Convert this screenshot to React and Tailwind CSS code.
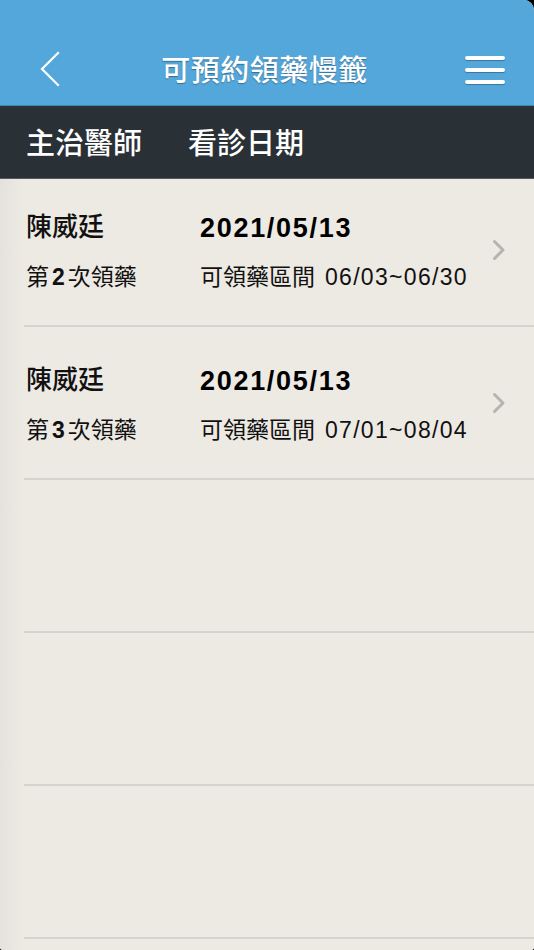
// Booking list for refill prescriptions: header, column titles, rows.

const cjk = { fontFamily: '"Noto Sans CJK TC", "Noto Sans", sans-serif' };
const latin = {
  fontFamily: '"Liberation Sans", "Noto Sans CJK TC", Arial, sans-serif',
};

const records = [
  { doctor: "陳威廷", visit: "2021/05/13", round: 2, range: "06/03~06/30" },
  { doctor: "陳威廷", visit: "2021/05/13", round: 3, range: "07/01~08/04" },
  null,
  null,
  null,
];

const BackIcon = () => (
  <svg width="20" height="36" viewBox="0 0 20 36" fill="none">
    <path
      d="M18 2 L2 18 L18 34"
      stroke="white"
      strokeWidth="2.2"
      strokeLinecap="square"
    />
  </svg>
);

const ChevronRight = () => (
  <svg width="14" height="22" viewBox="0 0 14 22" fill="none">
    <path
      d="M2.5 2.5 L11 11 L2.5 19.5"
      stroke="#b6b3b0"
      strokeWidth="3"
      strokeLinecap="round"
      strokeLinejoin="round"
    />
  </svg>
);

const Row = ({ item, first }) => (
  <div
    className={`ml-[24px] border-b-2 border-[#d6d2cd] flex items-center ${
      first ? "h-[148px] pb-[5px]" : "h-[153px]"
    }`}
  >
    {item && (
      <>
        <div className="flex-1 flex flex-col gap-[17px] pl-[2px] pt-[5px]">
          <div className="flex items-center h-[32px]">
            <span
              className="w-[174px] text-[26px] font-medium text-[#111] mb-[8px]"
              style={cjk}
            >
              {item.doctor}
            </span>
            <span
              className="text-[27px] font-bold text-black tracking-[1.7px]"
              style={latin}
            >
              {item.visit}
            </span>
          </div>
          <div className="flex items-center h-[30px]">
            <span
              className="w-[174px] text-[23px] text-[#111] flex items-baseline"
              style={cjk}
            >
              第<b className="font-bold mx-[3px]" style={latin}>{item.round}</b>
              次領藥
            </span>
            <span className="text-[23px] text-[#111]" style={cjk}>
              可領藥區間
              <span className="ml-[10px] tracking-[1.3px]" style={latin}>
                {item.range}
              </span>
            </span>
          </div>
        </div>
        <div className="pr-[28px] pt-[1px]">
          <ChevronRight />
        </div>
      </>
    )}
  </div>
);

export default function App() {
  return (
    <div className="bg-black w-[534px] h-[950px]">
      <div className="w-[534px] h-[950px] flex flex-col bg-[#ede9e3] rounded-tr-[10px] rounded-b-[3px] overflow-hidden">
        {/* top bar */}
        <header className="h-[106px] shrink-0 bg-[#54a7db] border-b border-[#3f87b5] flex items-end pb-[18px] px-[40px]">
          <div className="flex items-center w-full h-[36px]">
            <BackIcon />
            <h1
              className="flex-1 text-center text-white text-[29px] font-medium tracking-[0.5px] pl-[4px] [text-shadow:0_1px_1px_rgba(0,0,0,0.35)]"
              style={cjk}
            >
              可預約領藥慢籤
            </h1>
            <div className="flex flex-col gap-[8px] -mr-[11px] pt-[1px]">
              <span className="block w-[40px] h-[4px] rounded-full bg-white shadow-[0_1px_1px_rgba(0,0,0,0.3)]" />
              <span className="block w-[40px] h-[4px] rounded-full bg-white shadow-[0_1px_1px_rgba(0,0,0,0.3)]" />
              <span className="block w-[40px] h-[4px] rounded-full bg-white shadow-[0_1px_1px_rgba(0,0,0,0.3)]" />
            </div>
          </div>
        </header>

        {/* column titles */}
        <div className="h-[73px] shrink-0 bg-[#2a3136] border-b border-[#55595c] flex items-center pl-[26px] pb-[1px]">
          <span className="w-[162px] text-white text-[29px] font-medium" style={cjk}>
            主治醫師
          </span>
          <span className="text-white text-[29px] font-medium" style={cjk}>
            看診日期
          </span>
        </div>

        {/* list */}
        <main className="flex-1 bg-gradient-to-r from-[#e5e1dc] from-0% via-[#ede9e3] via-[4%] to-[#ede9e3]">
          {records.map((item, i) => (
            <Row key={i} item={item} first={i === 0} />
          ))}
        </main>
      </div>
    </div>
  );
}
